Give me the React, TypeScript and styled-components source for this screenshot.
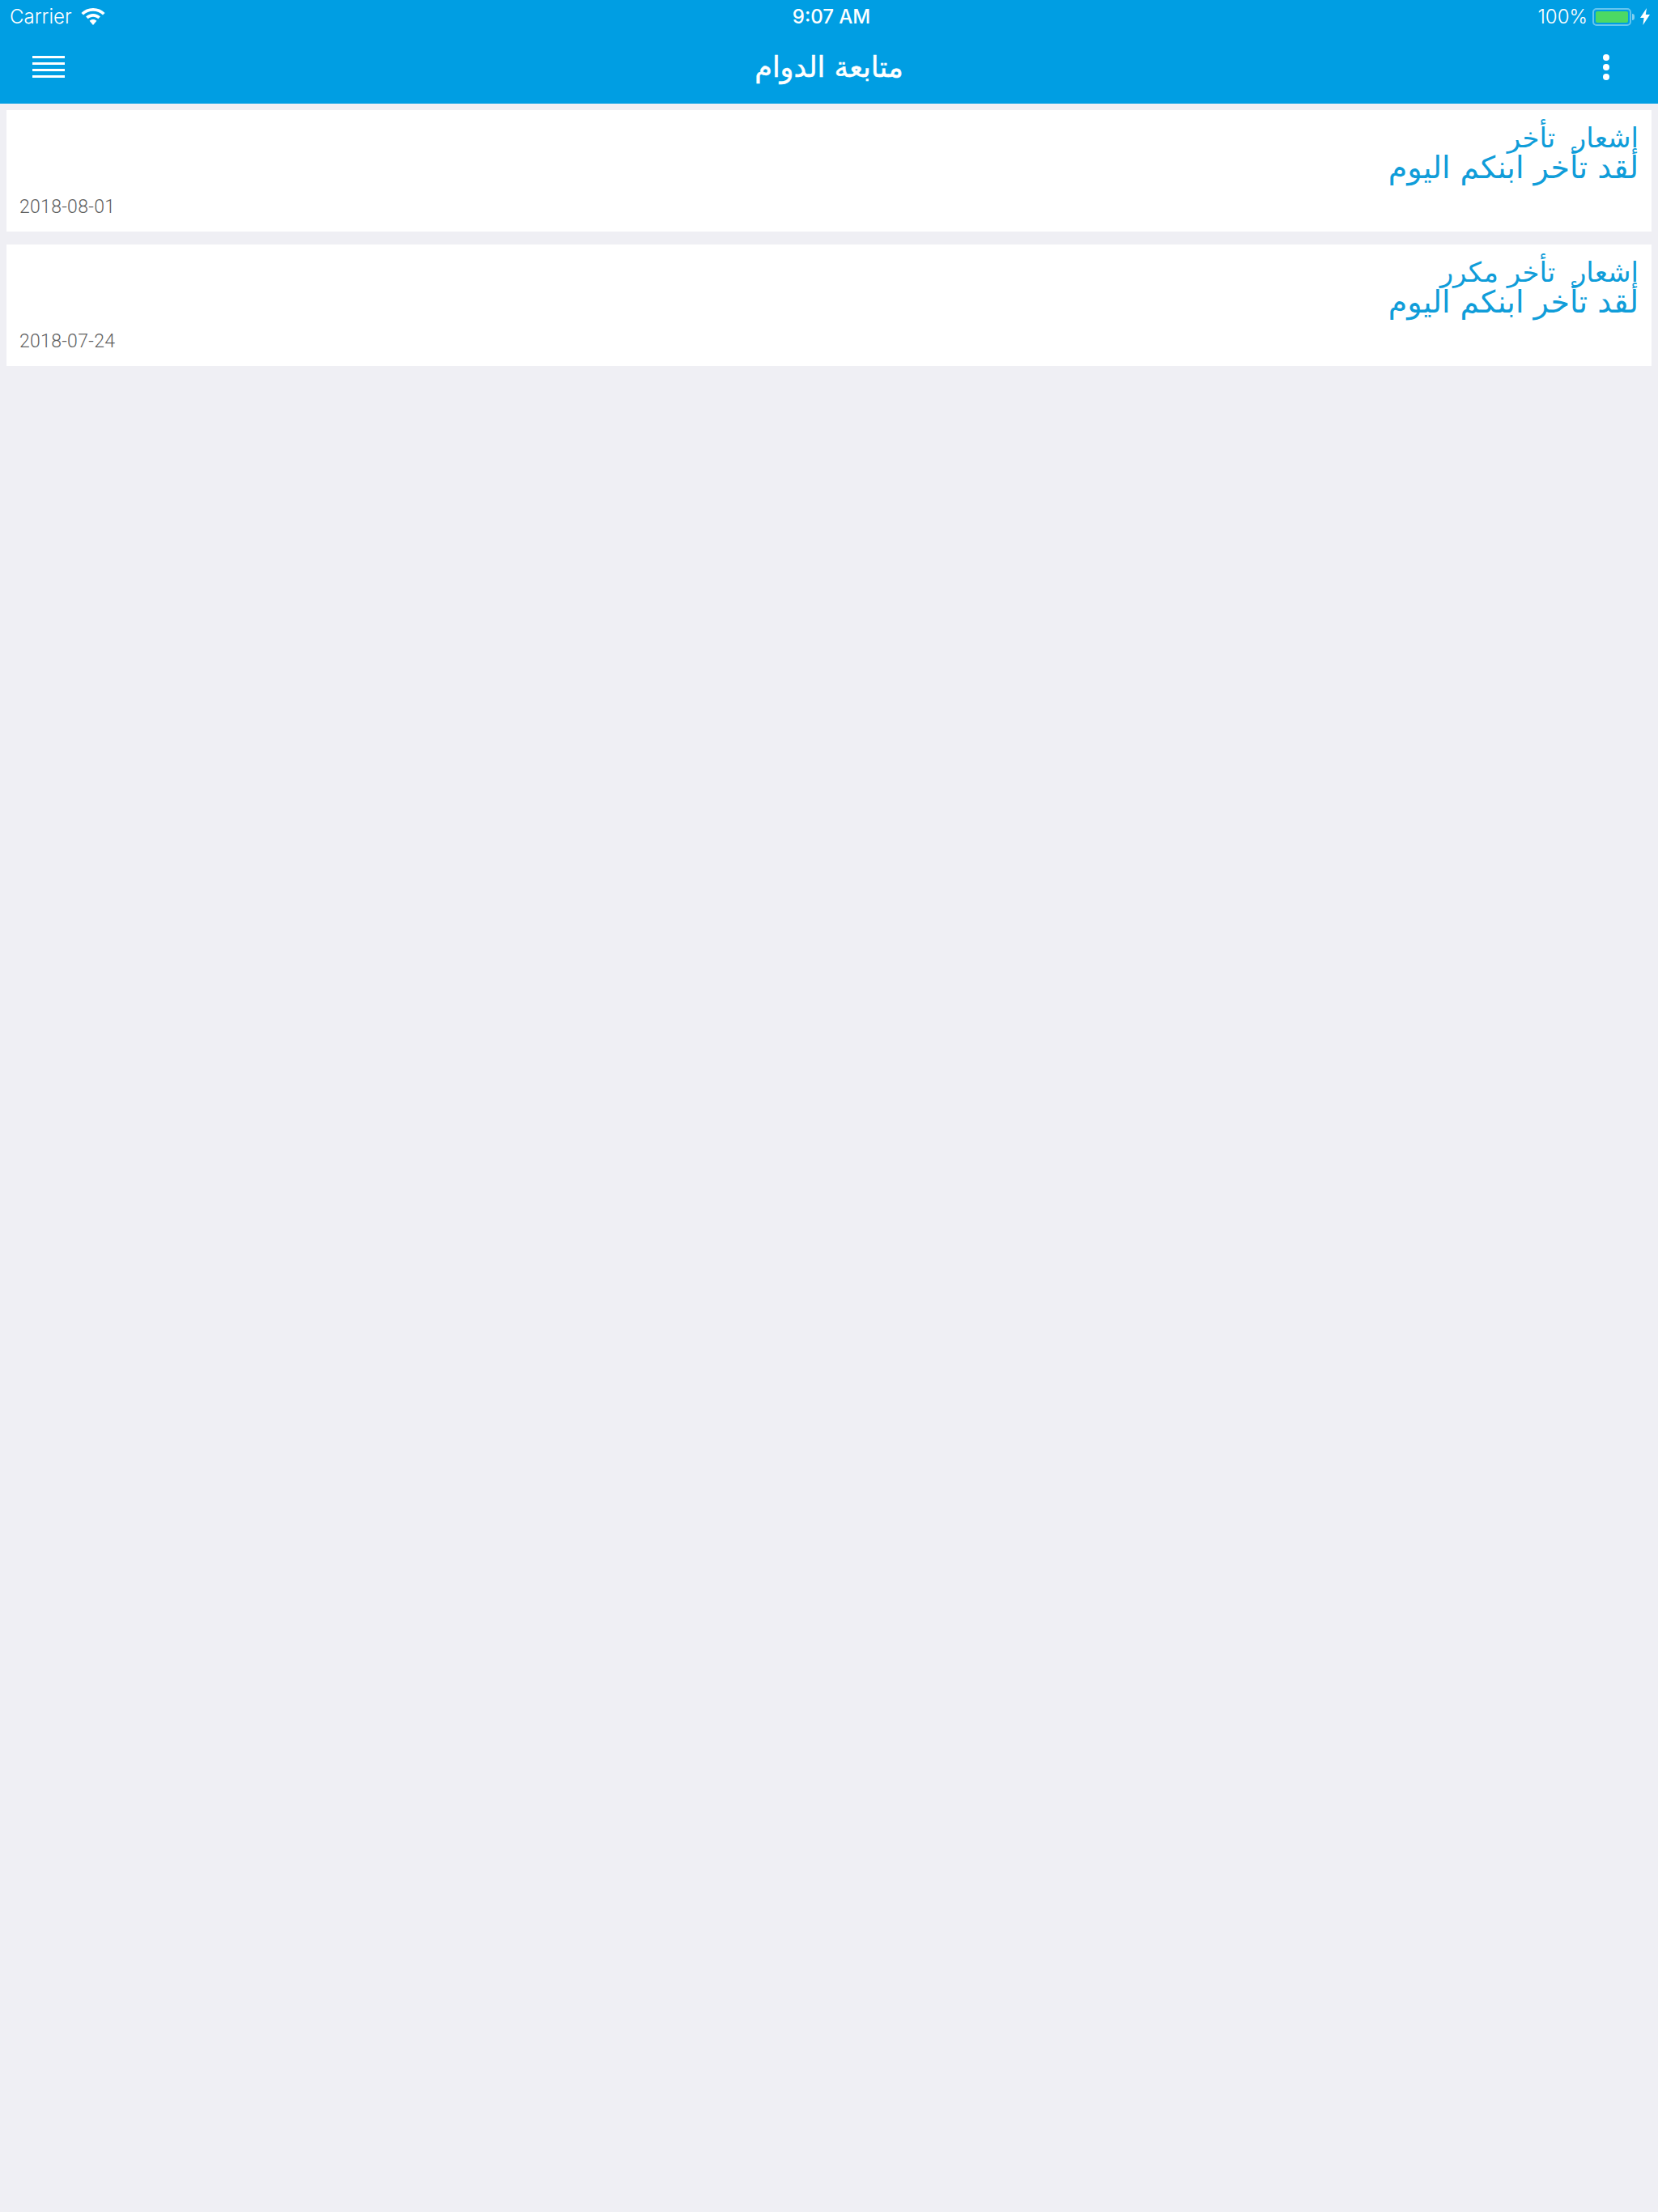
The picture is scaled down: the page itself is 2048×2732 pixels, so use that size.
import React from "react";
import styled, { createGlobalStyle } from "styled-components";

const GlobalStyle = createGlobalStyle`
  html, body {
    margin: 0;
    padding: 0;
    background: #efeff4;
  }
`;

const Page = styled.div`
  width: 2048px;
  height: 2732px;
  background: #efeff4;
  display: flex;
  flex-direction: column;
  font-family: "DejaVu Sans", sans-serif;
`;

const Header = styled.header`
  background: #009ee3;
  height: 128px;
  color: #fff;
  display: flex;
  flex-direction: column;
`;

const StatusBar = styled.div`
  height: 40px;
  box-sizing: border-box;
  display: grid;
  grid-template-columns: 1fr auto 1fr;
  align-items: center;
  padding: 1px 10px 0 12px;
  font-family: Inter, "Liberation Sans", sans-serif;
  font-size: 24px;
`;

const StatusLeft = styled.div`
  display: flex;
  align-items: center;
  gap: 11px;
  font-weight: 300;
`;

const StatusTime = styled.div`
  font-weight: 500;
  padding-left: 4px;
`;

const StatusRight = styled.div`
  display: flex;
  align-items: center;
  justify-content: flex-end;
  gap: 6px;
  font-weight: 300;
`;

const Battery = styled.div`
  width: 48px;
  height: 22px;
  box-sizing: border-box;
  border: 2px solid rgba(255, 255, 255, 0.4);
  border-radius: 5px;
  padding: 2px;
  display: flex;
  margin-right: 5px;
  position: relative;
  &::after {
    content: "";
    position: absolute;
    right: -6px;
    top: 5px;
    width: 3px;
    height: 8px;
    background: rgba(255, 255, 255, 0.5);
    border-radius: 0 3px 3px 0;
  }
`;

const BatteryFill = styled.div`
  flex: 1;
  background: #4cd964;
  border-radius: 2px;
`;

const Toolbar = styled.div`
  height: 88px;
  box-sizing: border-box;
  display: grid;
  grid-template-columns: 1fr auto 1fr;
  align-items: center;
  padding: 0 40px 3px;
`;

const Title = styled.div`
  font-size: 35px;
  font-weight: 400;
  line-height: 40px;
  direction: rtl;
  -webkit-text-stroke: 0.5px #fff;
`;

const MenuButton = styled.div`
  display: flex;
  justify-self: start;
`;

const MoreButton = styled.div`
  display: flex;
  justify-self: end;
  margin-right: 20px;
`;

const List = styled.main`
  display: flex;
  flex-direction: column;
  gap: 16px;
  padding: 8px;
`;

const Card = styled.article`
  background: #fff;
  height: 150px;
  box-sizing: border-box;
  padding: 16px 16px 0;
  display: flex;
  flex-direction: column;
`;

const Message = styled.div`
  direction: rtl;
  color: #109dd9;
  line-height: 36px;
`;

const MessageTitle = styled.div`
  font-size: 34px;
  white-space: pre;
`;

const MessageBody = styled.div`
  font-size: 38px;
  margin-top: 1px;
`;

const DateText = styled.div`
  margin-top: auto;
  padding-bottom: 16px;
  color: #5f5f5f;
  font-family: Roboto, "Liberation Sans", sans-serif;
  font-weight: 300;
  font-size: 23px;
  line-height: 28px;
  letter-spacing: 0.3px;
`;

const WifiIcon = () => (
  <svg width="30" height="21" viewBox="0 0 30 21">
    <path
      d="M15 0C9.3 0 4.2 2.2.4 5.9l2.6 2.7C6.1 5.6 10.3 3.7 15 3.7s8.9 1.9 12 4.9l2.6-2.7C25.8 2.2 20.7 0 15 0z"
      fill="#fff"
    />
    <path
      d="M15 7c-3.4 0-6.5 1.3-8.9 3.5l2.6 2.7c1.7-1.6 3.9-2.5 6.3-2.5s4.6.9 6.3 2.5l2.6-2.7C21.5 8.3 18.4 7 15 7z"
      fill="#fff"
    />
    <path d="M15 14c-1.7 0-3.2.7-4.4 1.7L15 21l4.4-5.3C18.2 14.7 16.7 14 15 14z" fill="#fff" />
  </svg>
);

const BoltIcon = () => (
  <svg width="12" height="21" viewBox="0 0 12 21">
    <path d="M8 0L0 12h4.6L3.4 21 12 8H6.8z" fill="#fff" />
  </svg>
);

const MenuIcon = () => (
  <svg width="40" height="27" viewBox="0 0 40 27">
    <rect y="0" width="40" height="3" fill="#fff" />
    <rect y="8" width="40" height="3" fill="#fff" />
    <rect y="16" width="40" height="3" fill="#fff" />
    <rect y="24" width="40" height="3" fill="#fff" />
  </svg>
);

const MoreIcon = () => (
  <svg width="8" height="32" viewBox="0 0 8 32">
    <circle cx="4" cy="4" r="4" fill="#fff" />
    <circle cx="4" cy="16" r="4" fill="#fff" />
    <circle cx="4" cy="28" r="4" fill="#fff" />
  </svg>
);

interface Notice {
  title: string;
  body: string;
  date: string;
}

const notices: Notice[] = [
  { title: "إشعار  تأخر", body: "لقد تأخر ابنكم اليوم", date: "2018-08-01" },
  { title: "إشعار  تأخر مكرر", body: "لقد تأخر ابنكم اليوم", date: "2018-07-24" },
];

const App: React.FC = () => {
  return (
    <Page>
      <GlobalStyle />
      <Header>
        <StatusBar>
          <StatusLeft>
            Carrier
            <WifiIcon />
          </StatusLeft>
          <StatusTime>9:07 AM</StatusTime>
          <StatusRight>
            100%
            <Battery>
              <BatteryFill />
            </Battery>
            <BoltIcon />
          </StatusRight>
        </StatusBar>
        <Toolbar>
          <MenuButton>
            <MenuIcon />
          </MenuButton>
          <Title>متابعة الدوام</Title>
          <MoreButton>
            <MoreIcon />
          </MoreButton>
        </Toolbar>
      </Header>
      <List>
        {notices.map((n) => (
          <Card key={n.date}>
            <Message>
              <MessageTitle>{n.title}</MessageTitle>
              <MessageBody>{n.body}</MessageBody>
            </Message>
            <DateText>{n.date}</DateText>
          </Card>
        ))}
      </List>
    </Page>
  );
};

export default App;
